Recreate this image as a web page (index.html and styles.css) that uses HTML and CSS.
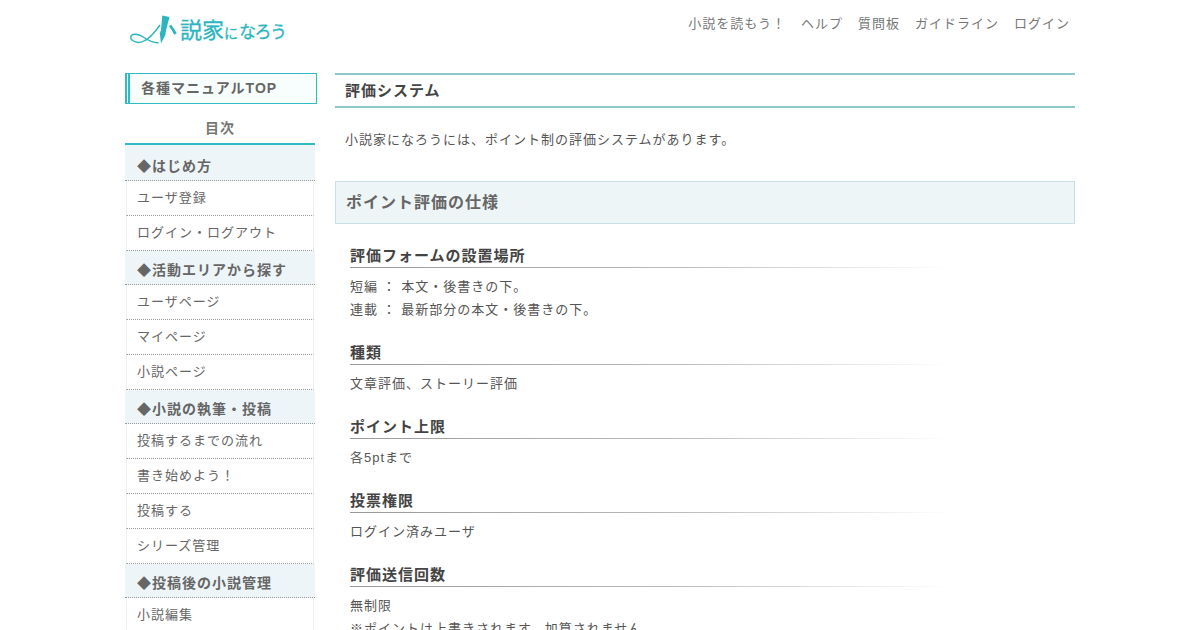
FILE: index.html
```html
<!DOCTYPE html>
<html lang="ja">
<head>
<meta charset="utf-8">
<title>評価システム</title>
<link rel="stylesheet" href="styles.css">
</head>
<body>
<div class="page">
  <header class="header">
    <a class="logo" href="#">
      <svg class="logo-pen" width="50" height="32" viewBox="0 0 50 32">
        <path d="M30 11C25 18 20 24 15 26.500C11 28.800 6 28.800 2.500 26.500C0 24.500 .2 21.500 3 20.500C7 19.500 11 21.500 14 23.500C19 27 24 29 28.500 28.700" fill="none" stroke="#2cb5c0" stroke-width="1.400"/>
        <path d="M32.300 1.500L39.500 3L36 16.500L35.300 21L31 29.500L29.800 19.500L31 16z" fill="#2cb5c0"/>
        <path d="M40 11.500C42 14 44 17 45.500 20" fill="none" stroke="#2cb5c0" stroke-width="2.800"/>
      </svg>
      <span class="logo-big">説家</span><span class="logo-ni">に</span><span class="logo-small">なろう</span>
    </a>
    <nav class="gnav">
      <a href="#">小説を読もう！</a>
      <a href="#">ヘルプ</a>
      <a href="#">質問板</a>
      <a href="#">ガイドライン</a>
      <a href="#">ログイン</a>
    </nav>
  </header>
  <div class="columns">
    <aside class="side">
      <a class="top-link" href="#">各種マニュアルTOP</a>
      <div class="toc-title">目次</div>
      <h3 class="toc-head first">◆はじめ方</h3>
      <a class="toc-item" href="#">ユーザ登録</a>
      <a class="toc-item" href="#">ログイン・ログアウト</a>
      <h3 class="toc-head">◆活動エリアから探す</h3>
      <a class="toc-item" href="#">ユーザページ</a>
      <a class="toc-item" href="#">マイページ</a>
      <a class="toc-item" href="#">小説ページ</a>
      <h3 class="toc-head">◆小説の執筆・投稿</h3>
      <a class="toc-item" href="#">投稿するまでの流れ</a>
      <a class="toc-item" href="#">書き始めよう！</a>
      <a class="toc-item" href="#">投稿する</a>
      <a class="toc-item" href="#">シリーズ管理</a>
      <h3 class="toc-head">◆投稿後の小説管理</h3>
      <a class="toc-item" href="#">小説編集</a>
    </aside>
    <main class="main">
      <h1 class="title">評価システム</h1>
      <p class="lead">小説家になろうには、ポイント制の評価システムがあります。</p>
      <h2 class="section">ポイント評価の仕様</h2>
      <section class="spec">
        <h3 class="spec-head">評価フォームの設置場所</h3>
        <p class="spec-text">短編 ： 本文・後書きの下。<br>連載 ： 最新部分の本文・後書きの下。</p>
        <h3 class="spec-head">種類</h3>
        <p class="spec-text">文章評価、ストーリー評価</p>
        <h3 class="spec-head">ポイント上限</h3>
        <p class="spec-text">各5ptまで</p>
        <h3 class="spec-head">投票権限</h3>
        <p class="spec-text">ログイン済みユーザ</p>
        <h3 class="spec-head">評価送信回数</h3>
        <p class="spec-text">無制限<br>※ポイントは上書きされます。加算されません。</p>
      </section>
    </main>
  </div>
</div>
</body>
</html>
```
FILE: styles.css
```css
* { box-sizing: border-box; }
html, body { margin: 0; padding: 0; height: 630px; overflow: hidden; background: #fff; }
body {
  font-family: "Liberation Sans", "Noto Sans CJK JP", sans-serif;
  font-size: 13px;
  letter-spacing: 1px;
  color: #555;
}
a { color: inherit; text-decoration: none; }
h1, h2, h3, p { margin: 0; }
.page { width: 950px; margin: 0 0 0 125px; }
.header { height: 73px; display: flex; justify-content: space-between; align-items: flex-start; }
.logo { display: flex; align-items: baseline; margin: 14px 0 0 5px; height: 34px; color: #2cb5c0; line-height: 34px; white-space: nowrap; letter-spacing: 0; -webkit-text-stroke: .3px #2cb5c0; }
.logo-pen { align-self: flex-start; flex: none; }
.logo-big { font-size: 22px; }
.logo-ni { font-size: 14px; margin: 0 1px 0 0; }
.logo-small { font-size: 17px; letter-spacing: -1.5px; }
.gnav { display: flex; gap: 15px; padding: 15px 5px 0 0; line-height: 18px; color: #777; }
.columns { display: flex; gap: 18px; align-items: flex-start; }
.side { width: 192px; flex: none; }
.top-link {
  display: block; height: 31px; line-height: 29px; padding-left: 11px;
  border: 1px solid #2fbcc4; border-left: 5px double #2fbcc4;
  background: #f8fefe; font-size: 14px; font-weight: bold; color: #666;
}
.toc-title {
  width: 190px; margin-top: 12px; height: 29px; line-height: 25px; text-align: center;
  font-size: 14px; font-weight: bold; color: #777;
  border-bottom: 2px solid #2fbcc4;
  box-shadow: 0 1px 0 #8fb9bd;
}
.toc-head {
  width: 190px; height: 34px; padding: 9px 0 0 12px; line-height: 20px;
  font-size: 14px; font-weight: bold; color: #666;
  background: #eef5f9; border-bottom: 1px dotted #999;
}
.toc-head.first { height: 36px; padding-top: 11px; }
.toc-item {
  display: block; width: 188px; margin-left: 1px; height: 35px; line-height: 34px; padding-left: 10px;
  color: #666; background: #fff; border-left: 1px solid #e8f0f2; border-right: 1px solid #e8f0f2;
  border-bottom: 1px dotted #999;
}
.main { width: 740px; flex: none; }
.title {
  height: 35px; line-height: 32px; padding-left: 10px; font-size: 15px; font-weight: bold; color: #444;
  border-top: 2px solid #8cc8cc; border-bottom: 2px solid #8cc8cc;
}
.lead { margin-top: 21px; padding-left: 10px; line-height: 21px; }
.section {
  margin-top: 31px; height: 43px; line-height: 41px; padding-left: 10px;
  font-size: 16px; font-weight: bold; color: #666;
  background: #eef5f7; border: 1px solid #c8dfe6;
}
.spec { padding: 22px 0 0 15px; }
.spec-head {
  height: 22px; line-height: 20px; font-size: 15px; font-weight: bold; color: #444;
  position: relative; width: 600px;
}
.spec-head::after {
  content: ""; position: absolute; left: 0; right: 0; bottom: 0; height: 1px;
  background: linear-gradient(to right, #999 0%, #bbb 55%, #fff 100%);
}
.spec-text { padding-top: 7px; line-height: 23px; margin-bottom: 22px; }
```
